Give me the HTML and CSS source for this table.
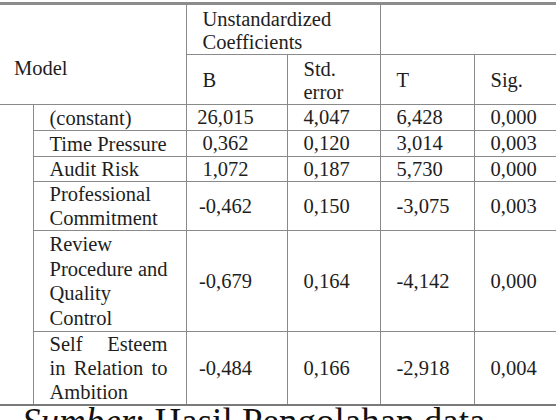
FILE: index.html
```html
<!DOCTYPE HTML>
<html>
    <head>
        <meta charset="UTF-8">
        <title>Coefficients</title>
        <link rel="stylesheet" href="styles.css">
    </head>
    <body>
        <table class="coef">
            <colgroup>
                <col class="c-idx">
                <col class="c-name">
                <col class="c-b">
                <col class="c-se">
                <col class="c-t">
                <col class="c-sig">
            </colgroup>
            <tr class="h1">
                <th colspan="2" rowspan="2" class="model">Model</th>
                <th colspan="2" class="group">Unstandardized Coefficients</th>
                <th colspan="2"></th>
            </tr>
            <tr class="h2">
                <th>B</th>
                <th>Std. error</th>
                <th>T</th>
                <th>Sig.</th>
            </tr>
            <tr class="r-one">
                <td rowspan="6" class="idx"></td>
                <td class="name">(constant)</td>
                <td class="b">26,015</td>
                <td>4,047</td>
                <td>6,428</td>
                <td>0,000</td>
            </tr>
            <tr class="r-one">
                <td class="name">Time Pressure</td>
                <td class="b">0,362</td>
                <td>0,120</td>
                <td>3,014</td>
                <td>0,003</td>
            </tr>
            <tr class="r-one last">
                <td class="name">Audit Risk</td>
                <td class="b">1,072</td>
                <td>0,187</td>
                <td>5,730</td>
                <td>0,000</td>
            </tr>
            <tr class="r-two">
                <td class="name">Professional Commitment</td>
                <td class="b">-0,462</td>
                <td>0,150</td>
                <td>-3,075</td>
                <td>0,003</td>
            </tr>
            <tr class="r-four">
                <td class="name">Review Procedure and Quality Control</td>
                <td class="b">-0,679</td>
                <td>0,164</td>
                <td>-4,142</td>
                <td>0,000</td>
            </tr>
            <tr class="r-three">
                <td class="name">Self Esteem in Relation to Ambition</td>
                <td class="b">-0,484</td>
                <td>0,166</td>
                <td>-2,918</td>
                <td>0,004</td>
            </tr>
        </table>
        <p class="caption"><em>Sumber</em>: Hasil Pengolahan data</p>
    </body>
</html>
```

FILE: styles.css
```css
body{
    margin: 0;
    padding-top: 2px;
    background-color: #ffffff;
    color: #1e1e1e;
    font-family: "Liberation Serif", "Times New Roman", serif;
    overflow: hidden;
}

.coef{
    width: 556px;
    border-collapse: collapse;
    table-layout: fixed;
    font-size: 20.5px;
    line-height: 23px;
    border-top: 3px solid #8c8c8c;
    border-bottom: 2px solid #7a7a7a;
}
.coef .c-idx{ width: 33px; }
.coef .c-name{ width: 153px; }
.coef .c-b{ width: 101px; }
.coef .c-se{ width: 93px; }
.coef .c-t{ width: 94px; }
.coef .c-sig{ width: 82px; }

.coef th,
.coef td{
    padding: 0 0 0 16px;
    border: 1px solid #8a8a8a;
    text-align: left;
    font-weight: normal;
    vertical-align: middle;
}
.coef tr > :first-child{ border-left: none; }
.coef tr > :last-child{ border-right: none; }

.coef .h1{ height: 49px; }
.coef .h1 th{ vertical-align: top; padding-top: 3px; }
.coef .h1 th.model{
    vertical-align: middle;
    padding: 28px 0 0 14px;
}
.coef .h2{ height: 50px; }
.coef .h2 th{ padding-top: 2px; }

.coef td.idx{ padding: 0; }
.coef td.name{
    padding: 0 18px 0 16px;
    text-align: justify;
    line-height: 24px;
}
.coef td.b{
    padding: 0 22px 0 0;
    text-align: center;
}

.coef .r-one{ height: 26px; }
.coef .r-one.last{ height: 25px; }
.coef .r-two{ height: 49px; }
.coef .r-four{ height: 101px; }
.coef .r-three{ height: 72px; }
.coef .r-four td.name{ line-height: 24.5px; }

.caption{
    margin: 1px 0 0 22px;
    font-size: 37px;
    line-height: 30px;
    color: #111111;
    white-space: nowrap;
}
```
